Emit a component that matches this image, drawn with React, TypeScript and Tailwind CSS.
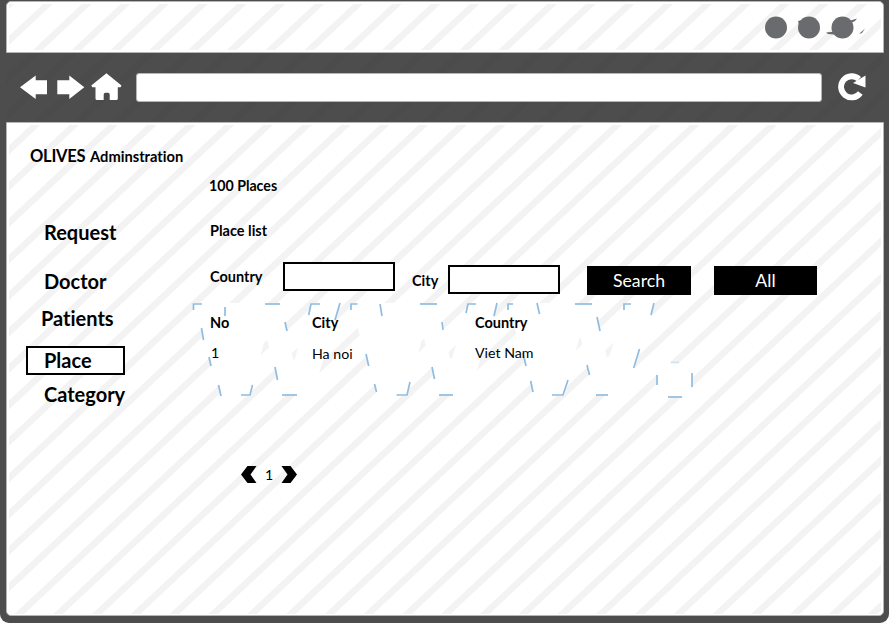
import React from "react";

const letterOffsets = [0, 157, 314];

const traces = [
  "M193.5 310V304H202", "M225 307V316", "M265 304H280", "M285 322L287 331",
  "M201.5 328L203.5 340", "M209 357L211 366", "M218.5 385L221 396", "M241 395H250L252.5 385",
  "M275 367L277.5 380", "M282 395H297", "M308.7 315L311 304H320", "M340 303L335 320",
  "M351 310V304H357.5", "M380 304L382 316", "M366 354L368.7 366", "M374.5 384L376.5 392",
  "M396.5 395H407L410 382", "M420 304H437", "M442 322L443 330", "M466 313L468 304H476",
  "M497 303L494 316", "M508 310V304H513", "M537 303L539.5 314", "M575 304H592",
  "M597 317L600 331", "M624 310V304H631", "M654 303L651 315", "M639.5 349L633.7 368",
  "M432 367L434.5 379", "M439 395H453", "M523 353L526 366", "M530.7 381L533 392",
  "M552 395H563L568 380", "M587 365L589.5 375", "M596 395H608", "M657 375V385",
  "M692 373V387", "M668 397H682",
];

const stripes = Array.from({ length: 42 }, (_, k) => {
  const x = 8.6 + 38.78 * k;
  return `M${x} 0h9.6l-664 624h-9.6z`;
}).join("");

function Backdrop() {
  return (
    <svg className="absolute inset-0" width="889" height="623" viewBox="0 0 889 623">
      <defs>
        <clipPath id="panels">
          <rect x="9" y="4" width="872" height="46" />
          <rect x="9" y="125" width="872" height="489" />
        </clipPath>
        <clipPath id="toolbar">
          <rect x="6" y="54" width="877" height="67" />
        </clipPath>
      </defs>
      <path d={stripes} fill="#4b4b4b" clipPath="url(#toolbar)" />
      <path d={stripes} fill="#f3f3f3" clipPath="url(#panels)" />
      {letterOffsets.map((dx) => (
        <path
          key={dx}
          transform={`translate(${dx} 0)`}
          fill="#fff"
          d="M193 303H280L294 362L311 303H341L312 396H281L266 335L250 396H221Z"
        />
      ))}
      <circle cx="674.5" cy="380" r="18" fill="#fff" />
      <g fill="none" stroke="#8fbce0" strokeWidth="1.7">
        {traces.map((d) => (
          <path key={d} d={d} />
        ))}
        <path d="M671 362.500H679" strokeOpacity=".4" />
      </g>
    </svg>
  );
}

function WindowDots() {
  return (
    <svg width="120" height="40" viewBox="760 8 120 40">
      <g fill="#6a6b6e">
        <circle cx="776" cy="27.500" r="11" />
        <circle cx="809" cy="27.500" r="11" />
        <circle cx="842.500" cy="27.500" r="11" />
        <path d="M798 21L802 20L800 28Z" />
        <path d="M826 32.500L836 31.500L840 35L828 34Z" />
        <path d="M849 21L857 18.500L855 21L851 23Z" />
        <path d="M859 34L865 28.500L862 33Z" />
      </g>
    </svg>
  );
}

function NavIcons() {
  return (
    <svg className="shrink-0" width="102" height="28" viewBox="20 73 102 28" fill="#fff">
      <path d="M20 87.300L35.700 75.500V80.300H47V94.300H35.700V99Z" />
      <path d="M84.300 87.300L69.300 75.500V80.300H57.300V94.300H69.300V99Z" />
      <path d="M106.400 73.300L121.500 85.500L120.500 87.300H117.800V98.500Q117.800 100 116.300 100H109.700V94.500Q109.700 92.800 108 92.800H105.400Q103.700 92.800 103.700 94.500V100H97Q95.500 100 95.500 98.500V87.300H92.300L91.300 85.500Z" />
    </svg>
  );
}

function ReloadIcon() {
  return (
    <svg className="shrink-0" width="30" height="28" viewBox="837.5 73 30 28">
      <path d="M859.500 79.200A10.600 10.600 0 1 0 860.800 93" fill="none" stroke="#fff" strokeWidth="5.800" />
      <path d="M866 75.500V87.500L853.500 83Z" fill="#fff" />
    </svg>
  );
}

function Arrow({ flip = false }: { flip?: boolean }) {
  return (
    <svg width="16" height="17" viewBox="0 0 16 17" className={flip ? "-scale-x-100" : ""}>
      <path d="M0 8.500L6.500 0H15.500L9.500 8.500L15.500 17H6.500Z" />
    </svg>
  );
}

export default function App() {
  return (
    <div className="h-[623px] w-[889px] bg-white font-['Lato','Carlito',sans-serif] text-black [font-variant-ligatures:none]">
      <div className="relative flex h-full flex-col rounded-b-[9px] bg-[#4d4d4d] pr-[5.5px] pb-[7px] pl-[6px]">
        <div className="mt-[1px] h-[51.5px] rounded-t-[5px] border border-[#b5b5b5] bg-white" />
        <div className="h-[69.500px]" />
        <div className="flex-1 rounded-b-[5px] border border-[#b5b5b5] bg-white" />
        <Backdrop />
        <div className="absolute inset-0 flex flex-col">
          <header className="flex h-[53px] justify-end pt-2 pr-[9px]">
            <WindowDots />
          </header>
          <nav className="flex h-[69px] items-start pt-5 pl-5">
            <NavIcons />
            <div className="ml-[14px] h-[29px] w-[686px] shrink-0 rounded-[3px] border border-[#b5b5b5] bg-white" />
            <div className="ml-[15px] flex">
              <ReloadIcon />
            </div>
          </nav>
          <h1 className="mt-[23px] flex h-[23px] items-baseline pl-[30px] leading-[22px] font-bold whitespace-nowrap">
            <span className="w-[60px] text-[16.500px] tracking-[-0.250px]">OLIVES</span>
            <span className="text-[14.700px]">Adminstration</span>
          </h1>
          <div className="flex">
            <aside className="w-[209px] shrink-0 pt-[50px] pl-[26px] text-[20px] leading-[28px] font-bold">
              <div className="pl-[18px]">Request</div>
              <div className="mt-[21px] pl-[18px]">Doctor</div>
              <div className="mt-[9px] pl-[15px]">Patients</div>
              <div className="mt-[14px] h-[29px] w-[99px] border-2 border-black bg-white pl-[16px] leading-[25px]">Place</div>
              <div className="mt-[5px] pl-[18px]">Category</div>
            </aside>
            <main className="pt-2 text-[14.200px] leading-5">
              <div className="font-bold">100 Places</div>
              <div className="mt-[25px] pl-px text-[14.500px] leading-5 font-bold">Place list</div>
              <div className="mt-[21px] flex h-[34px] items-start pl-px text-[14.500px] leading-5 font-bold">
                <div className="mt-[5px] w-[73px]">Country</div>
                <div className="h-[29px] w-[112px] border-2 border-black bg-white" />
                <div className="mt-[9px] ml-[17px] w-[36px]">City</div>
                <div className="mt-[3px] h-[29px] w-[112px] border-2 border-black bg-white" />
                <button className="mt-[4px] ml-[27px] h-[29px] w-[104px] bg-black text-[17.700px] font-normal text-white">Search</button>
                <button className="mt-[4px] ml-[23px] h-[29px] w-[103px] bg-black text-[17.700px] font-normal text-white">All</button>
              </div>
              <div className="mt-[17px] grid grid-cols-[102px_163px_100px] gap-y-[10px] pl-px">
                <div className="text-[14.500px] leading-5 font-bold">No</div>
                <div className="text-[14.500px] leading-5 font-bold">City</div>
                <div className="text-[14.500px] leading-5 font-bold">Country</div>
                <div className="pl-px">1</div>
                <div className="pt-px">Ha noi</div>
                <div>Viet Nam</div>
              </div>
              <div className="mt-[102px] flex h-[17px] items-center pl-[32px]">
                <Arrow />
                <span className="w-[24px] text-center">1</span>
                <Arrow flip />
              </div>
            </main>
          </div>
        </div>
      </div>
    </div>
  );
}
